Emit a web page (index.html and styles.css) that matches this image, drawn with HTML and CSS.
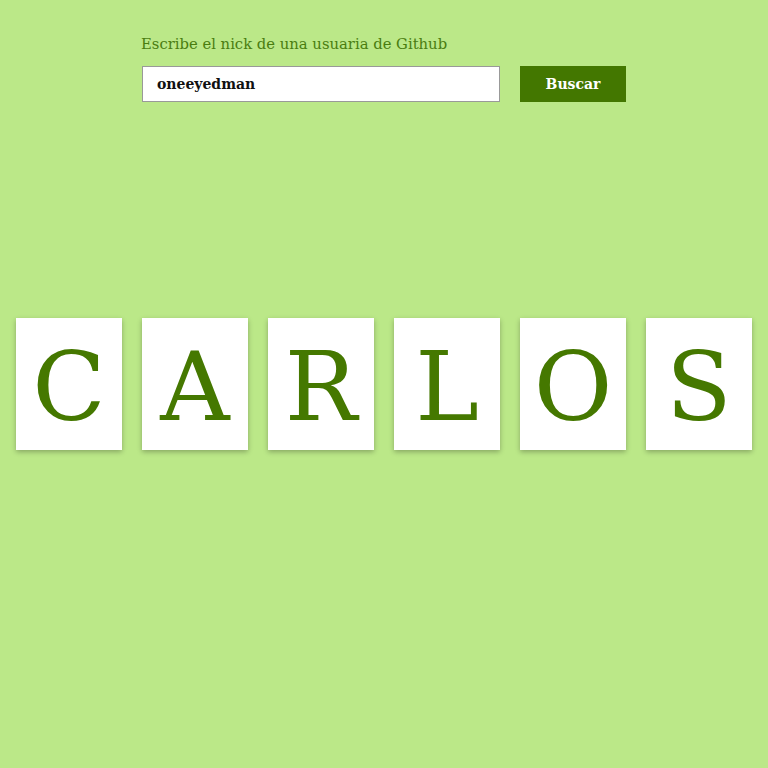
FILE: index.html
```html
<!DOCTYPE html>
<html lang="es">
<head>
<meta charset="utf-8">
<title>Github nick</title>
<link rel="stylesheet" href="styles.css">
</head>
<body>
<main class="page">
  <form class="search">
    <label class="search-label" for="nick">Escribe el nick de una usuaria de Github</label>
    <div class="search-row">
      <input class="search-input" id="nick" type="text" value="oneeyedman">
      <button class="search-btn" type="button">Buscar</button>
    </div>
  </form>
  <ul class="letters">
    <li class="card">C</li>
    <li class="card">A</li>
    <li class="card">R</li>
    <li class="card">L</li>
    <li class="card">O</li>
    <li class="card">S</li>
  </ul>
</main>
</body>
</html>
```
FILE: styles.css
```css
html, body {
  margin: 0;
  padding: 0;
  background: #bbe888;
  height: 100%;
}
body {
  font-family: "DejaVu Serif", "Liberation Serif", serif;
}
.page {
  display: flex;
  flex-direction: column;
  align-items: center;
}
.search {
  width: 484px;
  margin-top: 34px;
  display: flex;
  flex-direction: column;
  gap: 12px;
}
.search-label {
  display: block;
  color: #4a7d10;
  font-size: 14.8px;
  line-height: 20px;
  margin-left: -1px;
}
.search-row {
  display: flex;
  justify-content: space-between;
}
.search-input {
  box-sizing: border-box;
  width: 358px;
  height: 36px;
  margin: 0;
  border: 1px solid #999;
  background: #fff;
  padding: 0 14px;
  font-family: inherit;
  font-weight: bold;
  font-size: 14px;
  color: #111;
  outline: none;
}
.search-btn {
  width: 106px;
  height: 36px;
  margin: 0;
  border: 0;
  background: #437700;
  color: #fff;
  font-family: inherit;
  font-weight: bold;
  font-size: 14px;
  padding: 0;
}
.letters {
  list-style: none;
  margin: 216px 0 0;
  padding: 0;
  display: flex;
  gap: 20px;
}
.card {
  box-sizing: border-box;
  width: 106px;
  height: 132px;
  padding-top: 9px;
  background: #fff;
  box-shadow: 0 2px 5px rgba(0, 0, 0, 0.28);
  color: #457800;
  font-size: 96px;
  line-height: 120px;
  text-align: center;
}
```
